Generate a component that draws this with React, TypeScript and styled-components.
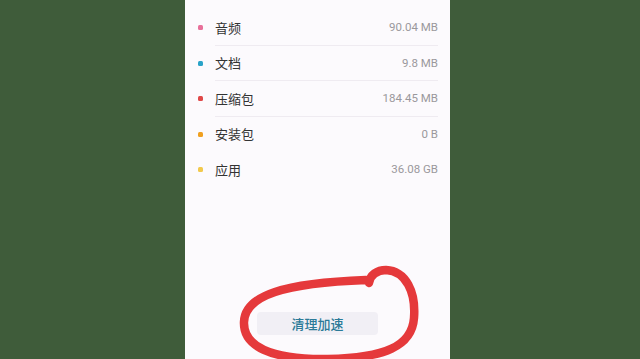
import React from "react";
import styled, { createGlobalStyle } from "styled-components";

const Global = createGlobalStyle`
  html, body { margin: 0; padding: 0; }
  body { background: #3f5c3a; overflow: hidden; }
`;

const Page = styled.div`
  position: relative;
  width: 640px;
  height: 359px;
  background: #3f5c3a;
  display: flex;
  padding-left: 185px;
  box-sizing: border-box;
  overflow: hidden;
`;

const Panel = styled.div`
  width: 265px;
  height: 359px;
  background: #fcfafd;
  display: flex;
  flex-direction: column;
  padding: 10px 12px 24px 13px;
  box-sizing: border-box;
  font-family: "Noto Sans CJK SC", "Noto Sans", sans-serif;
`;

const List = styled.div`
  display: flex;
  flex-direction: column;
`;

const Row = styled.div`
  display: flex;
  align-items: center;
  height: 35.5px;
`;

const Dot = styled.span<{ $color: string }>`
  width: 5px;
  height: 5px;
  border-radius: 1.5px;
  background: ${(p) => p.$color};
  margin-right: 12px;
  flex: none;
`;

const Body = styled.div<{ $divider: boolean }>`
  flex: 1;
  height: 100%;
  display: flex;
  align-items: center;
  justify-content: space-between;
  border-bottom: 1px solid ${(p) => (p.$divider ? "#efebf1" : "transparent")};
  box-sizing: border-box;
`;

const Label = styled.span`
  font-size: 13px;
  color: #333;
`;

const Value = styled.span`
  font-family: Roboto, "Noto Sans", sans-serif;
  font-size: 11.5px;
  color: #9a989c;
`;

const Spacer = styled.div`
  flex: 1;
`;

const Button = styled.div`
  width: 121px;
  height: 23px;
  margin-left: 59px;
  border-radius: 4px;
  background: #f1eff5;
  color: #2b7a98;
  font-size: 13px;
  font-weight: 500;
  display: flex;
  align-items: center;
  justify-content: center;
`;

const Mark = styled.svg`
  position: absolute;
  left: 0;
  top: 0;
  pointer-events: none;
`;

const items = [
  { label: "音频", value: "90.04 MB", color: "#e8709a", divider: true },
  { label: "文档", value: "9.8 MB", color: "#2aa3c8", divider: true },
  { label: "压缩包", value: "184.45 MB", color: "#e04848", divider: true },
  { label: "安装包", value: "0 B", color: "#f0a020", divider: false },
  { label: "应用", value: "36.08 GB", color: "#f2c94c", divider: false },
];

export default function App() {
  return (
    <Page>
      <Global />
      <Panel>
        <List>
          {items.map((it) => (
            <Row key={it.label}>
              <Dot $color={it.color} />
              <Body $divider={it.divider}>
                <Label>{it.label}</Label>
                <Value>{it.value}</Value>
              </Body>
            </Row>
          ))}
        </List>
        <Spacer />
        <Button>清理加速</Button>
      </Panel>
      <Mark width="640" height="359" viewBox="0 0 640 359">
        <path
          d="M 369 283 C 370 275 377 270 386 270 C 406 271 416 292 414 318 C 412 346 385 358 328 359 C 270 360 243 346 244 322 C 245 295 285 283 366 280"
          fill="none"
          stroke="#e5393b"
          strokeWidth="8.5"
          strokeLinecap="round"
          strokeLinejoin="round"
        />
      </Mark>
    </Page>
  );
}
